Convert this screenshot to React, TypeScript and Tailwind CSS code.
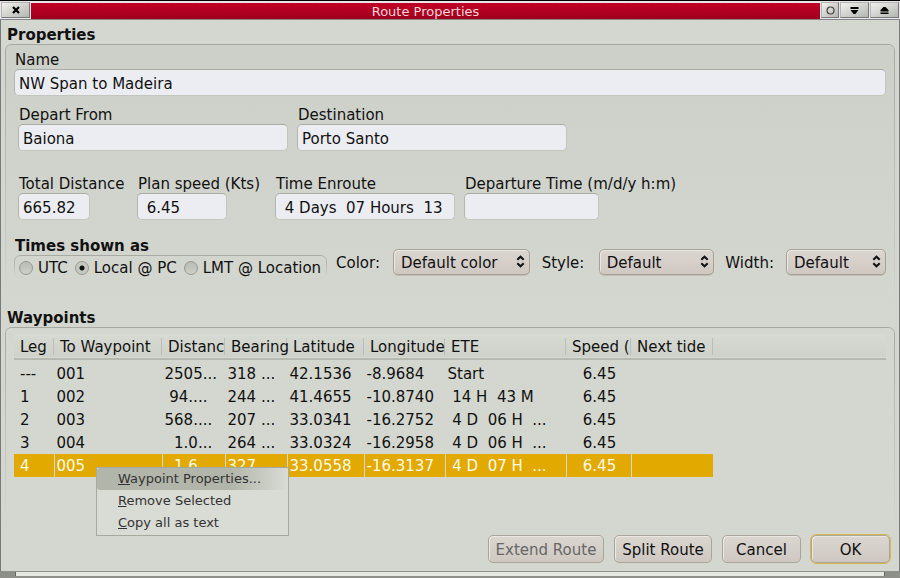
import React from "react";

const fieldClass =
  "h-[27px] rounded-[5px] border border-[#c3c6bd] border-t-[#a9aca3] border-l-[#b3b6ad] bg-[#ecedf2] px-1 pt-[2px] text-[15px] text-[#111] outline-none";

const fadeBorder =
  "before:pointer-events-none before:absolute before:inset-0 before:rounded-[6px] before:border before:border-[#a6a9a0] before:content-[''] before:[mask-image:linear-gradient(to_bottom,black,transparent)]";

function Field({ id, label, value, width }: { id: string; label: string; value: string; width: string }) {
  return (
    <div className="flex min-w-0 flex-col">
      <label htmlFor={id} className="pt-[2px] pl-px whitespace-nowrap leading-[17px]">
        {label}
      </label>
      <input id={id} defaultValue={value} className={`${fieldClass} ${width}`} />
    </div>
  );
}

function Picker({ id, label, value, width }: { id: string; label: string; value: string; width: string }) {
  return (
    <div className="flex items-center gap-3">
      <label htmlFor={id} className="min-w-[45px] pt-px">
        {label}
      </label>
      <div className={`relative ${width}`}>
        <select
          id={id}
          className="h-[26px] w-full appearance-none rounded-[5px] border border-[#a9a198] bg-linear-to-b from-[#dcd6d1] to-[#cfc8c2] pt-px pl-[7px] text-[15px] text-[#111] shadow-[inset_1px_1px_0_#ebe7e3,0_1px_0_#bfbfb6] outline-none"
        >
          <option>{value}</option>
        </select>
        <svg className="pointer-events-none absolute top-[6px] right-[5px]" width="9" height="13" viewBox="0 0 9 13" fill="none" stroke="#111" strokeWidth="2">
          <path d="M1.3 4.7 4.5 1.7 7.7 4.7M1.3 8.3 4.5 11.3 7.7 8.3" />
        </svg>
      </div>
    </div>
  );
}

function Choice({ label, checked }: { label: string; checked?: boolean }) {
  return (
    <label className="flex items-center gap-[5px] whitespace-nowrap">
      <input
        type="radio"
        name="times"
        defaultChecked={checked}
        className="size-[14px] appearance-none rounded-full border border-[#96998f] bg-linear-to-b from-[#b9bbb5] to-[#cdcfc9] checked:bg-[radial-gradient(circle,#111_0_2px,#c6c8c2_3px)]"
      />
      {label}
    </label>
  );
}

const columns = [
  { title: "Leg", width: "w-[40px]" },
  { title: "To Waypoint", width: "w-[108px]" },
  { title: "Distanc", width: "w-[63px]" },
  { title: "Bearing", width: "w-[62px]" },
  { title: "Latitude", width: "w-[77px]" },
  { title: "Longitude", width: "w-[81px]" },
  { title: "ETE", width: "w-[121px]" },
  { title: "Speed (", width: "w-[65px]" },
  { title: "Next tide", width: "w-[82px]" },
];

const rows = [
  ["---", "001", "2505...", "318 ...", "42.1536", "-8.9684", "Start", "   6.45", ""],
  ["1", "002", " 94....", "244 ...", "41.4655", "-10.8740", " 14 H  43 M", "   6.45", ""],
  ["2", "003", "568....", "207 ...", "33.0341", "-16.2752", " 4 D  06 H  ...", "   6.45", ""],
  ["3", "004", "  1.0...", "264 ...", "33.0324", "-16.2958", " 4 D  06 H  ...", "   6.45", ""],
  ["4", "005", "  1.6...", "327 ...", "33.0558", "-16.3137", " 4 D  07 H  ...", "   6.45", ""],
];

const menuItems = ["Waypoint Properties...", "Remove Selected", "Copy all as text"];

const titleButton =
  "flex h-[16px] items-center justify-center border border-[#77797a] border-t-[#b5b5b5] border-l-[#b5b5b5] bg-linear-to-br from-[#f1f1ee] to-[#b4b6b1]";

const actionButton =
  "h-[28px] rounded-[5px] border border-[#aaa59b] bg-linear-to-b from-[#dcd6d1] to-[#cfc8c2] pt-px shadow-[inset_1px_1px_0_#ebe7e3] whitespace-nowrap";

export default function App() {
  return (
    <div className="flex min-h-screen flex-col bg-[#d4d7cf] font-['DejaVu_Sans',sans-serif] text-[15px] leading-5 text-[#111]">
      <header className="flex h-[20px] items-center gap-px border-t border-b border-t-black border-b-[#85858a] bg-[#e9e5e8] px-px">
        <button aria-label="Close" className={`${titleButton} w-[29px]`}>
          <svg width="8" height="8" viewBox="0 0 8 8" stroke="#000" strokeWidth="2.2">
            <path d="M1 1 7 7M7 1 1 7" />
          </svg>
        </button>
        <h1 className="mt-px h-[16px] flex-1 bg-[radial-gradient(#8a001850_1px,transparent_1px),linear-gradient(#c40028,#9f001c)] bg-[size:3px_3px,100%_100%] text-center text-[13px] leading-[17px] text-[#f5d5d8]">
          Route Properties
        </h1>
        <button aria-label="Stick" className={`${titleButton} w-[18px]`}>
          <svg width="9" height="9" viewBox="0 0 9 9" fill="none" stroke="#444" strokeWidth="1.2">
            <circle cx="4.5" cy="4.5" r="3.5" />
          </svg>
        </button>
        <button aria-label="Minimize" className={`${titleButton} w-[29px]`}>
          <svg width="9" height="9" viewBox="0 0 9 9">
            <path d="M0.5 1H8.5V3H0.5ZM0.5 4H8.5L5.5 8H3.5Z" />
          </svg>
        </button>
        <button aria-label="Maximize" className={`${titleButton} w-[29px]`}>
          <svg width="9" height="9" viewBox="0 0 9 9">
            <path d="M0.5 8H8.5V6.5H0.5ZM0.5 5.5H8.5V4L5.5 1H3.5L0.5 4Z" />
          </svg>
        </button>
      </header>

      <main className="flex flex-1 flex-col border-x border-[#77797a] px-1 pt-[5px]">
        <h2 className="pt-[2px] pl-[2px] leading-[17px] font-bold">Properties</h2>
        <section className={`relative rounded-[6px] bg-linear-to-b from-[#cdd0c8] to-[#d4d7cf] px-[9px] pt-[6px] pb-[29px] ${fadeBorder}`}>
          <Field id="name" label="Name" value="NW Span to Madeira" width="w-full" />
          <div className="mt-[9px] flex gap-[9px] pl-1">
            <Field id="from" label="Depart From" value="Baiona" width="w-[270px]" />
            <Field id="dest" label="Destination" value="Porto Santo" width="w-[270px]" />
          </div>
          <div className="mt-[23px] grid grid-cols-[119px_138px_189px_1fr] pl-1">
            <Field id="total" label="Total Distance" value="665.82" width="w-[72px]" />
            <Field id="speed" label="Plan speed (Kts)" value=" 6.45" width="w-[90px]" />
            <Field id="enroute" label="Time Enroute" value=" 4 Days  07 Hours  13" width="w-[180px]" />
            <Field id="departure" label="Departure Time (m/d/y h:m)" value="" width="w-[135px]" />
          </div>
          <div className="mt-[16px] flex items-end gap-[9px]">
            <div>
              <h3 id="times-label" className="pt-[2px] pl-px leading-[17px] font-bold">Times shown as</h3>
              <div role="radiogroup" aria-labelledby="times-label" className={`relative flex h-[24px] w-[313px] items-center gap-[7px] pt-[2px] pl-[5px] ${fadeBorder}`}>
                <Choice label="UTC" />
                <Choice label="Local @ PC" checked />
                <Choice label="LMT @ Location" />
              </div>
            </div>
            <div className="flex flex-1 justify-between pb-1">
              <Picker id="color" label="Color:" value="Default color" width="w-[137px]" />
              <Picker id="style" label="Style:" value="Default" width="w-[115px]" />
              <Picker id="width" label="Width:" value="Default" width="w-[100px]" />
            </div>
          </div>
        </section>

        <h2 className="pt-[2px] pl-[2px] leading-[17px] font-bold">Waypoints</h2>
        <section className={`relative min-h-[192px] flex-1 px-[9px] pt-[7px] ${fadeBorder}`}>
          <table className="w-full table-fixed border-collapse text-left">
            <thead>
              <tr className="h-[25px] border-b-2 border-[#b5b8af] bg-linear-to-b from-[#d7dad2] to-[#cfd2ca]">
                {columns.map((c) => (
                  <th key={c.title} className={`${c.width} p-0 font-normal whitespace-nowrap`}>
                    <div className="h-[17px] border-r border-[#bbbeb5] pl-[6px] leading-[18px]">{c.title}</div>
                  </th>
                ))}
                <th aria-hidden="true" />
              </tr>
            </thead>
            <tbody className="before:block before:h-[2px] before:content-['']">
              {rows.map((r, i) => (
                <tr key={r[1]} className="h-[23px]">
                  {r.map((cell, j) => (
                    <td
                      key={j}
                      className={`overflow-hidden border-r p-0 whitespace-pre ${j === 0 ? "pl-[6px]" : "pl-[2px]"} ${
                        i === 4 ? "border-[#d4d7cf] bg-[#e2a900] text-[#fffbe8]" : "border-transparent"
                      }`}
                    >
                      {cell}
                    </td>
                  ))}
                  <td className="p-0" />
                </tr>
              ))}
            </tbody>
          </table>
          <ul role="menu" className="absolute top-[140px] left-[91px] w-[193px] border border-[#a6a9a0] bg-[#d9dbd5] pb-px text-[13px] text-[#333]">
            {menuItems.map((item, i) => (
              <li key={item} role="none">
                <button
                  role="menuitem"
                  className={`block h-[22px] w-full rounded-[3px] pl-[21px] text-left ${
                    i === 0 ? "bg-linear-to-r from-[#b2b6aa] from-70% to-[#d9dbd5]" : "bg-transparent"
                  }`}
                >
                  <span className="underline">{item[0]}</span>
                  {item.slice(1)}
                </button>
              </li>
            ))}
          </ul>
        </section>

        <footer className="flex justify-end gap-[10px] px-[5px] pt-[8px] pb-[8px]">
          <button disabled className={`${actionButton} w-[116px] text-[#666]`}>Extend Route</button>
          <button className={`${actionButton} w-[98px]`}>Split Route</button>
          <button className={`${actionButton} w-[79px]`}>Cancel</button>
          <button className={`${actionButton} w-[79px] border-[#97762a] outline-1 outline-[#d9b84a]`}>OK</button>
        </footer>
      </main>
      <div className="flex h-[7px] border-t border-b-2 border-[#8e9089] bg-[#e6e8e2]">
        <div className="w-4 border-r border-[#666] bg-[#8d8f89]" />
        <div className="flex-1" />
        <div className="w-4 border-l border-[#666] bg-[#8d8f89]" />
      </div>
    </div>
  );
}
